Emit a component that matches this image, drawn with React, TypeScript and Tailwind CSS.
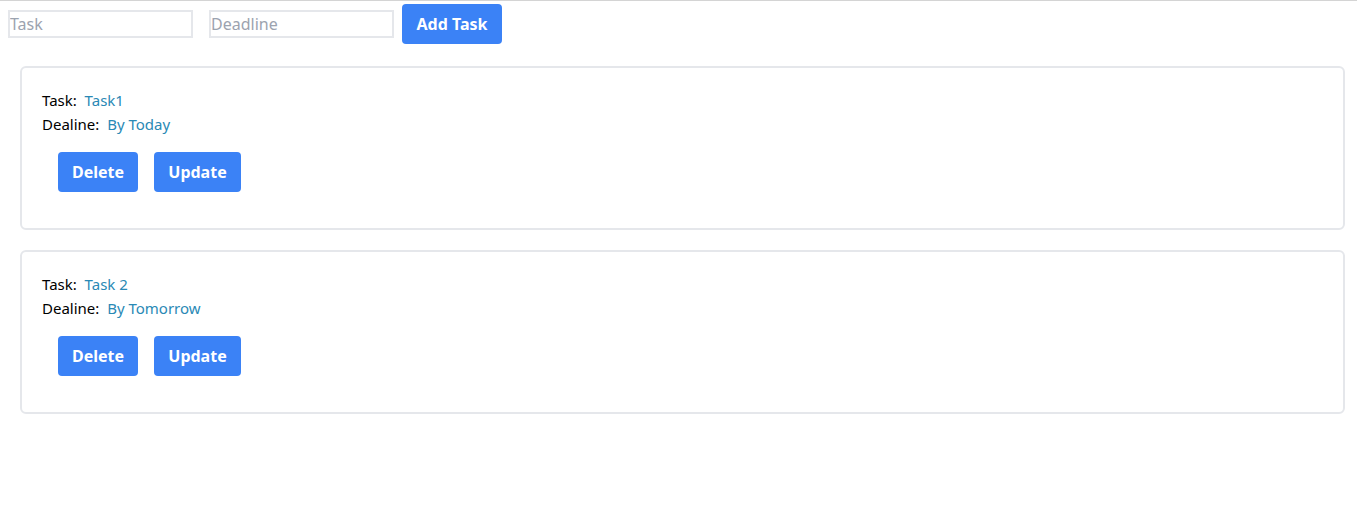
const tasks = [
  { id: 1, name: "Task1", deadline: "By Today" },
  { id: 2, name: "Task 2", deadline: "By Tomorrow" },
];

export default function App() {
  return (
    <div className="min-h-screen bg-white border-t border-[#d4d4d4] font-['Noto_Sans',sans-serif] text-[15px] text-black">
      <div className="flex items-center h-[46px] pl-2">
        <input
          placeholder="Task"
          className="w-[185px] h-[28px] border-2 border-[#e5e7eb] px-0 text-[16px] placeholder:text-[#9ca3af] outline-none"
        />
        <input
          placeholder="Deadline"
          className="ml-[16px] w-[185px] h-[28px] border-2 border-[#e5e7eb] px-0 text-[16px] placeholder:text-[#9ca3af] outline-none"
        />
        <button className="ml-[8px] w-[100px] h-[40px] rounded bg-[#3b82f6] text-white font-bold text-[16px] mt-[-1px]">
          Add Task
        </button>
      </div>
      <div className="flex flex-col gap-[20px] mt-[19px] ml-5 mr-3">
        {tasks.map((t) => (
          <div key={t.id} className="border-2 border-[#e5e7eb] rounded-md px-5 pt-[20px] pb-[36px]">
            <div className="leading-6">
              Task:&nbsp; <span className="text-[#2a89b5]">{t.name}</span>
            </div>
            <div className="leading-6">
              Dealine:&nbsp; <span className="text-[#2a89b5]">{t.deadline}</span>
            </div>
            <div className="flex gap-4 pl-4 mt-4">
              <button className="w-[80px] h-[40px] rounded bg-[#3b82f6] text-white font-bold text-[16px]">
                Delete
              </button>
              <button className="w-[87px] h-[40px] rounded bg-[#3b82f6] text-white font-bold text-[16px]">
                Update
              </button>
            </div>
          </div>
        ))}
      </div>
    </div>
  );
}
